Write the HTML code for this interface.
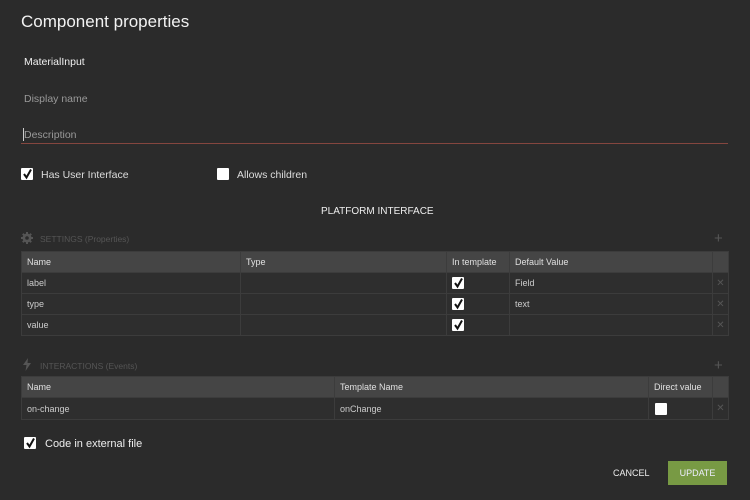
<!DOCTYPE html><html><head><style>
body{margin:0;width:750px;height:500px;background:#2b2b2b;font-family:"Liberation Sans",sans-serif;color:#ddd;position:relative;overflow:hidden}
.a{position:absolute;white-space:nowrap}
.cb{position:absolute;width:12px;height:12px;background:#fff;border-radius:1px}
.cb svg{position:absolute;left:1px;top:0}
table{position:absolute;border-collapse:collapse;font-size:9px;color:#ccc;table-layout:fixed}
td{border:1px solid #3c3c3c;padding:0 5px;height:20px;background:#2e2e2e;position:relative}
tr.h td{background:#454545;color:#e0e0e0}
.x{color:#555;text-align:center;padding:0;font-size:10px}
</style></head><body>
<div class="a" style="left:21px;top:12px;font-size:17px;color:#f2f2f2">Component properties</div>
<div class="a" style="left:24px;top:56px;font-size:10.5px;color:#f0f0f0">MaterialInput</div>
<div class="a" style="left:24px;top:93px;font-size:10.5px;color:#999">Display name</div>
<div class="a" style="left:24px;top:129px;font-size:10.5px;color:#999">Description</div>
<div class="a" style="left:23px;top:128px;width:1px;height:13px;background:#ccc"></div>
<div class="a" style="left:21px;top:143px;width:707px;height:1px;background:#85463f"></div>
<div class="cb" style="left:21px;top:168px"><svg width="11" height="12"><path d="M2 6 L4.5 9.5 L9 1.5" stroke="#111" stroke-width="2" fill="none"/></svg></div>
<div class="a" style="left:41px;top:169px;font-size:10.5px">Has User Interface</div>
<div class="cb" style="left:217px;top:168px"></div>
<div class="a" style="left:237px;top:169px;font-size:10.5px">Allows children</div>
<div class="a" style="left:321px;top:206px;font-size:10px;color:#eee">PLATFORM INTERFACE</div>
<svg class="a" style="left:21px;top:232px" width="12" height="12" viewBox="0 0 12 12"><circle cx="6" cy="6" r="4.5" fill="#555"/><path d="M6 0v12M0 6h12M1.8 1.8l8.4 8.4M10.2 1.8l-8.4 8.4" stroke="#555" stroke-width="2"/><circle cx="6" cy="6" r="1.8" fill="#2b2b2b"/></svg>
<div class="a" style="left:40px;top:234px;font-size:8.5px;color:#555">SETTINGS (Properties)</div>
<div class="a" style="left:714px;top:230px;font-size:15px;color:#555">+</div>
<table style="left:21px;top:251px;width:707px">
<colgroup><col style="width:219px"><col style="width:206px"><col style="width:63px"><col style="width:203px"><col style="width:16px"></colgroup>
<tr class="h"><td>Name</td><td>Type</td><td>In template</td><td>Default Value</td><td style="border-left:none"></td></tr>
<tr><td>label</td><td></td><td><div class="cb" style="left:5px;top:4px"><svg width="11" height="12"><path d="M2 6 L4.5 9.5 L9 1.5" stroke="#111" stroke-width="2" fill="none"/></svg></div></td><td>Field</td><td class="x">✕</td></tr>
<tr><td>type</td><td></td><td><div class="cb" style="left:5px;top:4px"><svg width="11" height="12"><path d="M2 6 L4.5 9.5 L9 1.5" stroke="#111" stroke-width="2" fill="none"/></svg></div></td><td>text</td><td class="x">✕</td></tr>
<tr><td>value</td><td></td><td><div class="cb" style="left:5px;top:4px"><svg width="11" height="12"><path d="M2 6 L4.5 9.5 L9 1.5" stroke="#111" stroke-width="2" fill="none"/></svg></div></td><td></td><td class="x">✕</td></tr>
</table>
<svg class="a" style="left:23px;top:358px" width="8" height="13"><path d="M5 0 L0 7 H3.5 L2.5 13 L8 5 H4.5 Z" fill="#555"/></svg>
<div class="a" style="left:40px;top:361px;font-size:8.5px;color:#555">INTERACTIONS (Events)</div>
<div class="a" style="left:714px;top:357px;font-size:15px;color:#555">+</div>
<table style="left:21px;top:376px;width:707px">
<colgroup><col style="width:313px"><col style="width:314px"><col style="width:64px"><col style="width:16px"></colgroup>
<tr class="h"><td>Name</td><td>Template Name</td><td>Direct value</td><td style="border-left:none"></td></tr>
<tr><td style="height:21px">on-change</td><td>onChange</td><td><div class="cb" style="left:6px;top:5px"></div></td><td class="x">✕</td></tr>
</table>
<div class="cb" style="left:24px;top:437px"><svg width="11" height="12"><path d="M2 6 L4.5 9.5 L9 1.5" stroke="#111" stroke-width="2" fill="none"/></svg></div>
<div class="a" style="left:45px;top:438px;font-size:11px;color:#eee">Code in external file</div>
<div class="a" style="left:613px;top:468px;font-size:9px;color:#eee">CANCEL</div>
<div class="a" style="left:668px;top:461px;width:59px;height:24px;background:#789a44;color:#eef;font-size:9px;line-height:24px;text-align:center">UPDATE</div>
</body></html>
